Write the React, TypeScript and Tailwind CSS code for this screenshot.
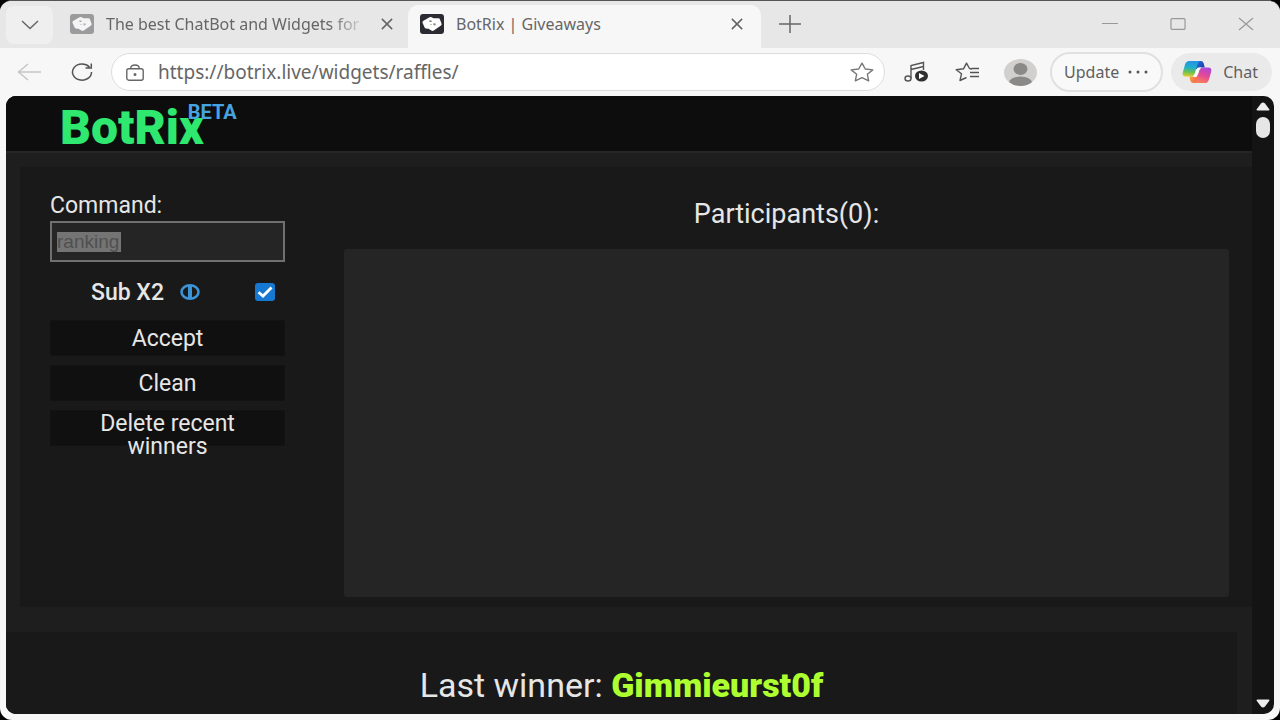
import type { ReactNode } from "react";

function DiceIcon({ dark = false }: { dark?: boolean }) {
  return (
    <svg viewBox="0 0 24 20" className="w-6 h-5 shrink-0" aria-hidden="true">
      <rect x="0" y="0" width="24" height="20" rx="3" fill={dark ? "#2b2c33" : "#9b9b9d"} />
      <path
        d="M9.500 3.200Q10.500 2.600 11.600 3.200L13.500 4.300 18.500 4.200Q19.600 4.300 19.900 5.300L21.600 9.800Q21.900 10.800 21 11.500L13.800 16.500Q12.600 17.200 11.400 16.600L8.500 14.800 5.800 14.400Q4.800 14.200 4.500 13.200L2.500 8.800Q2.200 7.700 3.100 7Z"
        fill={dark ? "#ffffff" : "#f4f4f4"}
      />
      <g fill={dark ? "#8d8490" : "#b5b5b5"}>
        <ellipse cx="10.500" cy="7.200" rx="1.300" ry="0.900" />
        <ellipse cx="14.500" cy="10.300" rx="1.300" ry="1.100" />
        <ellipse cx="11" cy="10.500" rx="0.700" ry="0.600" />
      </g>
    </svg>
  );
}

function CloseIcon({ className }: { className: string }) {
  return (
    <svg viewBox="0 0 14 14" className={className} fill="none" stroke="currentColor" strokeWidth="1.800" aria-hidden="true">
      <path d="M1 1 13 13M13 1 1 13" />
    </svg>
  );
}

function CopilotIcon() {
  return (
    <svg viewBox="0 0 32 26" className="w-8 h-6 shrink-0" aria-hidden="true">
      <defs>
        <linearGradient id="cpLeft" x1="0.300" y1="0" x2="0.200" y2="1">
          <stop offset="0" stopColor="#2593e6" />
          <stop offset="0.400" stopColor="#22aecb" />
          <stop offset="0.700" stopColor="#6cc24f" />
          <stop offset="1" stopColor="#e8cf2c" />
        </linearGradient>
        <linearGradient id="cpRight" x1="0.800" y1="0" x2="0.400" y2="1">
          <stop offset="0" stopColor="#a548dd" />
          <stop offset="0.500" stopColor="#e3479c" />
          <stop offset="1" stopColor="#fa7f58" />
        </linearGradient>
        <linearGradient id="cpTop" x1="0" y1="0" x2="1" y2="0.600">
          <stop offset="0" stopColor="#2a7de0" />
          <stop offset="1" stopColor="#1b3cae" />
        </linearGradient>
        <linearGradient id="cpBottom" x1="0" y1="0" x2="1" y2="0.500">
          <stop offset="0" stopColor="#f7b03b" />
          <stop offset="1" stopColor="#f2604f" />
        </linearGradient>
      </defs>
      <path d="M14 1H20Q22.500 1 23.200 3.500L24.400 8H20Q17.500 8 16.500 10.500L13 8Z" fill="url(#cpTop)" />
      <path d="M18 25H12Q9.500 25 8.800 22.500L7.600 18H12Q14.500 18 15.500 15.500L19 18Z" fill="url(#cpBottom)" />
      <path d="M7.500 1H19.500Q17.500 1.500 16.600 4.500L13.400 15Q12.300 18 9.500 18H4Q-.5 18 .6 13.500L3 5Q4.200 1 7.500 1Z" fill="url(#cpLeft)" />
      <path d="M24.500 25H12.500Q14.500 24.500 15.400 21.500L18.600 11Q19.700 8 22.500 8H28Q32.500 8 31.400 12.500L29 21Q27.800 25 24.500 25Z" fill="url(#cpRight)" />
      <path d="M17.500 8H20.500Q18.800 9 18 11.500L16.400 16.500Q15.700 18.500 14.500 18.500H11.500Q13.200 17 14 14.500L15.600 10Q16.200 8 17.500 8Z" fill="#fff" />
    </svg>
  );
}

function TabStrip() {
  return (
    <div className="flex h-[47px] items-stretch bg-[#e7e7e7] pt-1 text-[#666]">
      <button aria-label="Tab actions" className="ml-1.5 mt-px flex h-[38px] w-[47px] items-center justify-center rounded-lg bg-[#efefef]">
        <svg viewBox="0 0 18 10" className="h-2.5 w-[18px]" fill="none" stroke="#666" strokeWidth="1.500" aria-hidden="true">
          <path d="M1 1 9 8.500 17 1" />
        </svg>
      </button>

      <div className="flex w-[355px] items-center pb-1.5 pl-[17px] pr-3.5">
        <DiceIcon />
        <span className="ml-3 w-[262px] whitespace-nowrap text-base mask-r-from-85% mask-r-to-100%">
          The best ChatBot and Widgets for
        </span>
        <button aria-label="Close tab" className="ml-3">
          <CloseIcon className="h-3 w-3.5" />
        </button>
      </div>

      <div className="flex w-[353px] items-center rounded-t-[10px] bg-[#f7f7f7] pb-1.5 pl-3 pr-[17px]">
        <DiceIcon dark />
        <span className="ml-3 flex-1 whitespace-nowrap text-base">BotRix | Giveaways</span>
        <button aria-label="Close tab">
          <CloseIcon className="h-3 w-3.5" />
        </button>
      </div>

      <button aria-label="New tab" className="ml-[18px] pb-1.5">
        <svg viewBox="0 0 22 18" className="h-[18px] w-[22px]" fill="none" stroke="#666" strokeWidth="1.500" aria-hidden="true">
          <path d="M11 0V18M0 9H22" />
        </svg>
      </button>

      <div className="ml-auto flex items-center gap-[52px] pb-1.5 pr-[26px] text-[#999]">
        <button aria-label="Minimize">
          <svg viewBox="0 0 16 12" className="h-3 w-4" stroke="currentColor" aria-hidden="true">
            <path d="M0 5.500H16" />
          </svg>
        </button>
        <button aria-label="Maximize">
          <svg viewBox="0 0 16 12" className="h-3 w-4" fill="none" stroke="currentColor" strokeWidth="1.200" aria-hidden="true">
            <rect x="1" y="0.600" width="14" height="10.800" rx="1" />
          </svg>
        </button>
        <button aria-label="Close window">
          <svg viewBox="0 0 16 14" className="h-3.5 w-4" fill="none" stroke="currentColor" strokeWidth="1.200" aria-hidden="true">
            <path d="M1 1 15 13M15 1 1 13" />
          </svg>
        </button>
      </div>
    </div>
  );
}

function Toolbar() {
  return (
    <div className="flex h-12 items-center bg-[#f7f7f7] pl-[17px] pr-2 text-[#5f5f5f]">
      <button aria-label="Back">
        <svg viewBox="0 0 24 18" className="h-[18px] w-6" fill="none" stroke="#c6c6c6" strokeWidth="1.500" aria-hidden="true">
          <path d="M24 9H1.500M11 1 1.500 9 11 17" />
        </svg>
      </button>
      <button aria-label="Refresh" className="ml-[30px]">
        <svg viewBox="0 0 22 18" className="h-[18px] w-[22px]" fill="none" stroke="#555" strokeWidth="1.500" aria-hidden="true">
          <path d="M20.500 9A9.500 8 0 1 1 18.500 4.200M20.300 0.500V5H14.500" />
        </svg>
      </button>

      <label className="ml-[18px] flex h-[38px] flex-1 items-center rounded-full border border-[#dcdcdc] bg-white pl-3.5 pr-2.5">
        <svg viewBox="0 0 18 17" className="h-[17px] w-[18px] shrink-0" fill="none" stroke="#666" strokeWidth="1.400" aria-hidden="true">
          <rect x="0.800" y="4.800" width="16.400" height="11.400" rx="2" />
          <path d="M4.800 4.800V4Q5 1 9 1T13.200 4V4.800" />
          <circle cx="9" cy="10.500" r="0.800" fill="#666" />
        </svg>
        <input
          aria-label="Address"
          defaultValue="https://botrix.live/widgets/raffles/"
          className="ml-3.5 min-w-0 flex-1 bg-transparent text-[19px] text-[#666] outline-none"
        />
        <svg viewBox="0 0 24 20" className="h-5 w-6 shrink-0" fill="none" stroke="#777" strokeWidth="1.400" strokeLinejoin="round" aria-hidden="true">
          <path d="M12 1.200 15.300 7 22.800 7.900 17.300 12.200 18.700 18.800 12 15.600 5.300 18.800 6.700 12.200 1.200 7.900 8.700 7Z" />
        </svg>
      </label>

      <div className="ml-[19px] flex items-center gap-[26px]">
        <button aria-label="Media controls">
          <svg viewBox="0 0 25 22" className="h-[22px] w-[25px]" fill="none" stroke="#555" strokeWidth="1.400" aria-hidden="true">
            <ellipse cx="4" cy="17.500" rx="3" ry="2.500" />
            <path d="M7 17.500V4.500L19.500 1.500V9M7 8.500 19.500 5.500" />
            <ellipse cx="17.500" cy="15" rx="6.500" ry="5.500" fill="#2f2f2f" stroke="none" />
            <path d="M15 12V18L20.500 15Z" fill="#fff" stroke="none" />
          </svg>
        </button>
        <button aria-label="Favorites">
          <svg viewBox="0 0 25 20" className="h-5 w-[25px]" fill="none" stroke="#555" strokeWidth="1.400" strokeLinejoin="round" aria-hidden="true">
            <path d="M17 7 14.500 6.500 11.500 1.200 8.500 6.800 1.200 7.800 6.500 11.800 5 18.500 11.500 15.500" />
            <path d="M16.500 6.500H24M15 10.500H24M15 14.500H24" />
          </svg>
        </button>
        <button aria-label="Profile" className="-ml-0.5">
          <svg viewBox="0 0 33 27" className="h-[27px] w-[33px]" aria-hidden="true">
            <clipPath id="avatarClip">
              <ellipse cx="16.500" cy="13.500" rx="16.500" ry="13.500" />
            </clipPath>
            <g clipPath="url(#avatarClip)">
              <rect width="33" height="27" fill="#d2d0ce" />
              <ellipse cx="16.500" cy="10" rx="7" ry="6" fill="#8b8987" />
              <ellipse cx="16.500" cy="23.500" rx="11.500" ry="6" fill="#8b8987" />
            </g>
          </svg>
        </button>
      </div>

      <button className="ml-[13px] flex h-10 items-center gap-2 rounded-full border-2 border-[#e0e0e0] bg-[#f9f9f9] px-3 text-base">
        Update
        <svg viewBox="0 0 22 4" className="h-1 w-[22px]" fill="#555" aria-hidden="true">
          <circle cx="3" cy="2" r="1.500" />
          <circle cx="11" cy="2" r="1.500" />
          <circle cx="19" cy="2" r="1.500" />
        </svg>
      </button>
      <button className="ml-2 flex h-[38px] items-center gap-2.5 rounded-full bg-[#eaeaea] pl-2.5 pr-3.5 text-base">
        <CopilotIcon />
        Chat
      </button>
    </div>
  );
}

function ActionButton({ children }: { children: ReactNode }) {
  return (
    <button className="h-9 w-full border border-[#131313] bg-[#101010] px-8 pt-px text-[23px] leading-[23px]">
      {children}
    </button>
  );
}

function Raffle() {
  return (
    <section className="ml-3.5 flex min-h-[440px] gap-[59px] bg-[#191919] pb-2.5 pl-[30px] pr-[23px]">
      <form className="w-[235px] pt-[25px]">
        <label htmlFor="command" className="block h-[29px] text-[23px] leading-7">
          Command:
        </label>
        <div className="flex h-[41px] items-center border-2 border-[#707070] bg-[#252525] px-[5px]">
          <input
            id="command"
            placeholder="ranking"
            className="h-5 w-16 bg-[#747474] font-['Liberation_Sans',sans-serif] text-[19px] leading-5 outline-none placeholder:text-[#505050]"
          />
        </div>

        <div className="mb-[11px] mt-[13px] flex h-[34px] items-center pl-[41px] pr-2.5">
          <label htmlFor="subx2" className="text-[23px] font-medium leading-none">
            Sub X2
          </label>
          <svg viewBox="0 0 20 16" className="ml-4 h-4 w-5" fill="none" stroke="#3b93d6" aria-hidden="true">
            <ellipse cx="10" cy="8" rx="8.500" ry="6.700" strokeWidth="2.600" />
            <path d="M10 2V14" strokeWidth="4" />
          </svg>
          <span className="relative ml-auto h-[18px] w-5">
            <input id="subx2" type="checkbox" defaultChecked className="peer block h-[18px] w-5 appearance-none rounded-[3px] bg-[#555] checked:bg-[#1678d0]" />
            <svg viewBox="0 0 20 18" className="pointer-events-none absolute inset-0 hidden h-[18px] w-5 peer-checked:block" fill="none" stroke="#fff" strokeWidth="2.800" aria-hidden="true">
              <path d="M3.500 9.200 8 13 16.500 4.500" />
            </svg>
          </span>
        </div>

        <div className="flex flex-col gap-[9px]">
          <ActionButton>Accept</ActionButton>
          <ActionButton>Clean</ActionButton>
          <ActionButton>Delete recent winners</ActionButton>
        </div>
      </form>

      <div className="flex flex-1 flex-col">
        <h2 className="pb-5 pt-8 text-center text-[27px] leading-[30px]">Participants(0):</h2>
        <div className="flex-1 rounded-[3px] bg-[#252525]" />
      </div>
    </section>
  );
}

export default function App() {
  return (
    <div className="min-h-screen bg-black font-['Noto_Sans',sans-serif]">
      <div className="flex min-h-screen flex-col overflow-hidden rounded-xl border-t border-[#555] bg-[#f7f7f7]">
        <TabStrip />
        <Toolbar />

        <main className="mx-1.5 mb-1.5 flex flex-1 overflow-hidden rounded-[10px] bg-[#141414] font-[Roboto,sans-serif] text-[#e6e6e6]">
          <div className="flex flex-1 flex-col bg-[#1e1e1e]">
            <header className="h-[57px] border-b-2 border-[#262626] bg-[#0d0d0d] pl-[54px]">
              <a href="#" className="flex items-start pt-2 text-[#2fe86f]">
                <span className="text-[48px] font-black leading-[48px]">BotRix</span>
                <sup className="top-0 -ml-4 text-xl font-bold leading-4 text-[#47a3e0]">BETA</sup>
              </a>
            </header>
            <div className="pt-3.5">
              <Raffle />
            </div>
            <section className="mr-[15px] mt-[25px] flex flex-1 items-center justify-center bg-[#191919] pt-6">
              <p className="whitespace-nowrap text-[34px] leading-9">
                Last winner: <strong className="font-black text-[#adff2f]">Gimmieurst0f</strong>
              </p>
            </section>
          </div>

          <div className="flex w-[22px] flex-col items-center justify-between py-1.5">
            <div className="flex flex-col items-center gap-1.5">
              <svg viewBox="0 0 14 9" className="h-[9px] w-3.5" fill="#eee" aria-hidden="true">
                <path d="M7 0.500Q8 .5 9 1.500L13.500 7.500Q13.500 8.500 12.500 8.500H1.500Q.5 8.500.5 7.500L5 1.500Q6 .5 7 .5Z" />
              </svg>
              <div className="h-[21px] w-3.5 rounded-full bg-[#e6e6e6]" />
            </div>
            <svg viewBox="0 0 14 9" className="h-[9px] w-3.5" fill="#eee" aria-hidden="true">
              <path d="M7 8.500Q8 8.500 9 7.500L13.500 1.500Q13.500.5 12.500.5H1.500Q.5.5.5 1.500L5 7.500Q6 8.500 7 8.500Z" />
            </svg>
          </div>
        </main>
      </div>
    </div>
  );
}
